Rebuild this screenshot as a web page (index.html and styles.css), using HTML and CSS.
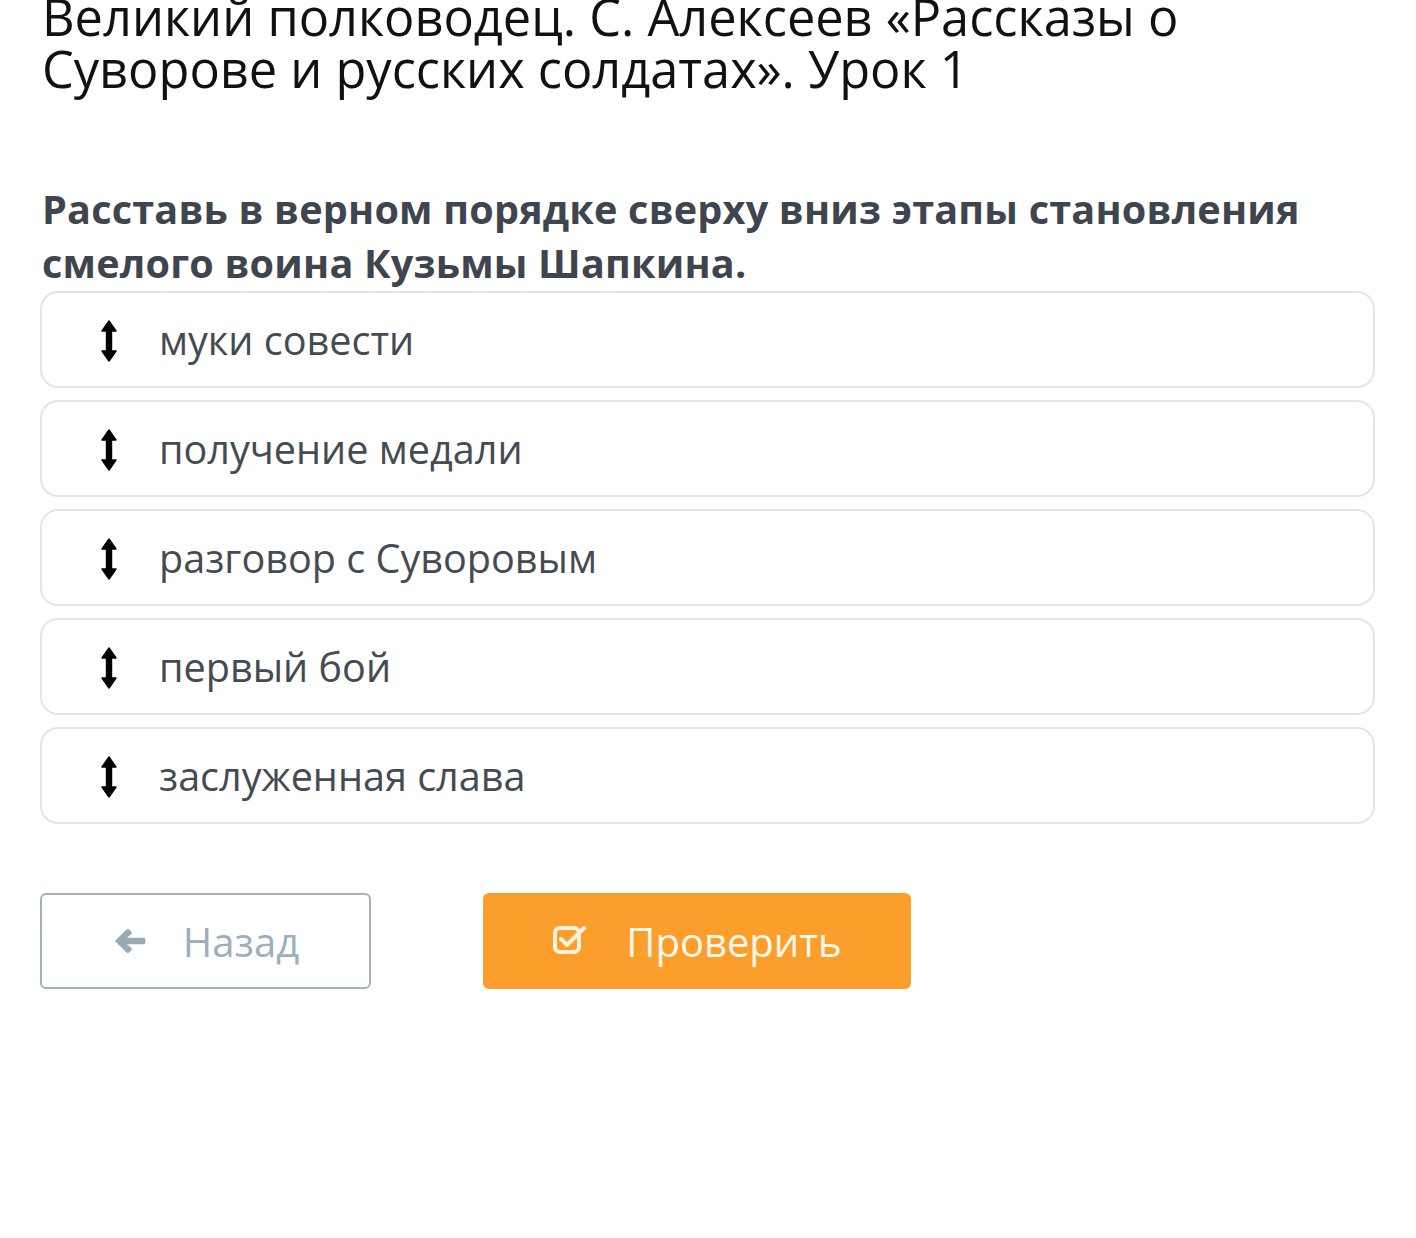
FILE: index.html
```html
<!DOCTYPE html>
<html lang="ru">
<head>
<meta charset="utf-8">
<title>Урок</title>
<link rel="stylesheet" href="styles.css">
</head>
<body>
<main class="page">
  <h1 class="title">Великий полководец. С. Алексеев «Рассказы о Суворове и русских солдатах». Урок 1</h1>
  <h2 class="question">Расставь в верном порядке сверху вниз этапы становления смелого воина Кузьмы Шапкина.</h2>
  <ul class="list">
    <li class="item"><svg class="drag" viewBox="0 0 18 42"><path d="M9 1 L16 11 H11.5 V31 H16 L9 41 L2 31 H6.5 V11 H2 Z"/></svg><span>муки совести</span></li>
    <li class="item"><svg class="drag" viewBox="0 0 18 42"><path d="M9 1 L16 11 H11.5 V31 H16 L9 41 L2 31 H6.5 V11 H2 Z"/></svg><span>получение медали</span></li>
    <li class="item"><svg class="drag" viewBox="0 0 18 42"><path d="M9 1 L16 11 H11.5 V31 H16 L9 41 L2 31 H6.5 V11 H2 Z"/></svg><span>разговор с Суворовым</span></li>
    <li class="item"><svg class="drag" viewBox="0 0 18 42"><path d="M9 1 L16 11 H11.5 V31 H16 L9 41 L2 31 H6.5 V11 H2 Z"/></svg><span>первый бой</span></li>
    <li class="item"><svg class="drag" viewBox="0 0 18 42"><path d="M9 1 L16 11 H11.5 V31 H16 L9 41 L2 31 H6.5 V11 H2 Z"/></svg><span>заслуженная слава</span></li>
  </ul>
  <div class="actions">
    <button class="btn btn-back"><svg class="ico-back" viewBox="0 0 34 28"><path d="M2.5 14 L13 3.5 Q14.5 2 16 3.5 L17.5 5 Q19 6.5 17.5 8 L13.5 11 H29 Q31 11 31 13 V15 Q31 17 29 17 H13.5 L17.5 20 Q19 21.5 17.5 23 L16 24.5 Q14.5 26 13 24.5 Z"/></svg><span>Назад</span></button>
    <button class="btn btn-check"><svg class="ico-check" viewBox="0 0 36 32"><rect x="3" y="5" width="24" height="24" rx="5"/><path d="M9 16 L15 22 L32 5"/></svg><span>Проверить</span></button>
  </div>
</main>
</body>
</html>
```

FILE: styles.css
```css
html, body {
  margin: 0;
  padding: 0;
  background: #ffffff;
}
body {
  font-family: "Open Sans", "Noto Sans", sans-serif;
}
.page {
  padding: 0 41px 0 40px;
}
.title {
  margin: -9px 0 0 2px;
  font-size: 50.5px;
  line-height: 52px;
  font-weight: 400;
  color: #111111;
}
.question {
  margin: 87px 0 0 2px;
  font-size: 39.6px;
  line-height: 54px;
  font-weight: 700;
  color: #3e454e;
  letter-spacing: 0.2px;
}
.list {
  list-style: none;
  margin: 1px 0 0 0;
  padding: 0;
  display: flex;
  flex-direction: column;
  gap: 12px;
}
.item {
  height: 93px;
  border: 2px solid #e3e6e8;
  border-radius: 18px;
  display: flex;
  align-items: center;
  padding-left: 58px;
  font-size: 39.6px;
  color: #454b52;
}
.drag {
  width: 18px;
  height: 42px;
  fill: #000;
  stroke: #000;
  stroke-width: 1.4;
  stroke-linejoin: round;
  margin-right: 41px;
  margin-top: 2px;
}
.actions {
  display: flex;
  margin-top: 69px;
  gap: 112px;
}
.btn {
  height: 96px;
  border-radius: 6px;
  font-family: "Open Sans", "Noto Sans", sans-serif;
  font-size: 40px;
  display: flex;
  align-items: center;
  justify-content: center;
  cursor: pointer;
}
.btn-back {
  width: 331px;
  background: #fff;
  border: 2px solid #a3b1b9;
  color: #9bb0bd;
}
.ico-back {
  width: 37px;
  height: 30px;
  fill: #97abb7;
  margin-right: 34px;
  margin-left: 0;
}
.btn-check {
  width: 428px;
  background: #fb9e2c;
  border: none;
  color: #fff7ea;
}
.ico-check {
  width: 36px;
  height: 32px;
  fill: none;
  stroke: #fff3df;
  stroke-width: 4;
  stroke-linecap: round;
  stroke-linejoin: round;
  margin-right: 38px;
  margin-top: -4px;
}
```
